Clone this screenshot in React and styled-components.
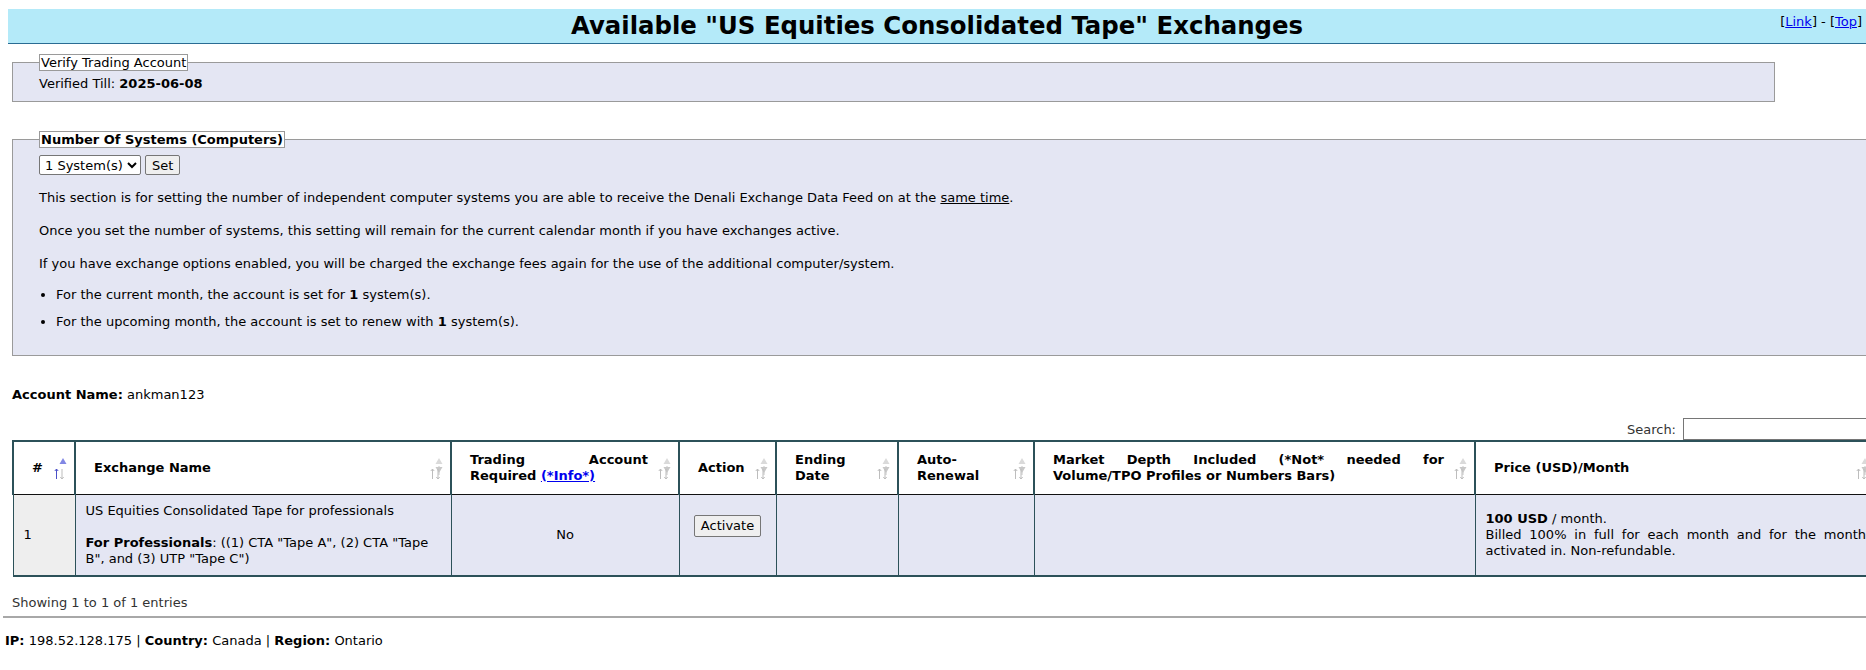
import React from "react";
import styled, { createGlobalStyle } from "styled-components";

const tahoma = `Tahoma, "DejaVu Sans", sans-serif`;
const verdana = `Verdana, "DejaVu Sans", sans-serif`;

const GlobalStyle = createGlobalStyle`
  html, body {
    margin: 0;
    padding: 0;
    background: #fff;
    overflow-x: hidden;
  }
  body {
    font-family: ${tahoma};
    font-size: 13px;
    color: #000;
  }
`;

const Page = styled.div`
  width: 1875px;
  padding-top: 9px;
`;

const TitleBar = styled.div`
  margin-left: 8px;
  width: 1858px;
  height: 34px;
  background: #b4eaf9;
  border-bottom: 1px solid #2a6c93;
  display: flex;
  align-items: center;
  justify-content: center;
  position: relative;
`;

const Title = styled.h1`
  margin: 0;
  font-family: ${verdana};
  font-size: 24.4px;
  font-weight: bold;
  line-height: 28px;
`;

const TopLinks = styled.div`
  position: absolute;
  right: 4px;
  top: 5px;
  font-size: 13px;
`;

const Link = styled.a`
  color: #0000ee;
  text-decoration: underline;
`;

const Fieldset = styled.fieldset`
  margin: ${(p) => p.$top}px 0 0 12px;
  width: ${(p) => p.$width}px;
  box-sizing: border-box;
  background: #e4e6f3;
  border: 1px solid #9a9a9a;
  padding: ${(p) => p.$pt}px 26px ${(p) => p.$bottom}px 26px;
  min-inline-size: 0;
`;

const Legend = styled.legend`
  background: #fff;
  border: 1px solid #9a9a9a;
  padding: 0 1px;
  font-weight: ${(p) => (p.$bold ? "bold" : "normal")};
  line-height: 15px;
`;

const Line = styled.div`
  line-height: 16px;
`;

const Controls = styled.div`
  display: flex;
  gap: 4px;
  align-items: center;
  margin-top: 3px;
`;

const Select = styled.select`
  font-family: ${tahoma};
  font-size: 13px;
  height: 20px;
  border: 1px solid #767676;
  border-radius: 2px;
  background: #fff;
  padding: 0 1px;
`;

const Button = styled.button`
  font-family: ${tahoma};
  font-size: 13px;
  height: ${(p) => p.$h || 20}px;
  padding: 0 6px;
  border: 1px solid #767676;
  border-radius: 2px;
  background: #efefef;
  color: #000;
`;

const ActionForm = styled.form`
  margin: 0 0 19px;
`;

const Para = styled.p`
  margin: 17px 0 0;
  line-height: 16px;
  ${Controls} + & {
    margin-top: 15px;
  }
`;

const List = styled.ul`
  margin: 15px 0 0;
  padding-left: 17px;
  li {
    line-height: 16px;
  }
  li + li {
    margin-top: 11px;
  }
`;

const Under = styled.span`
  text-decoration: underline;
`;

const AccountLine = styled.div`
  margin: 31px 0 0 12px;
  line-height: 16px;
`;

const SearchRow = styled.div`
  display: flex;
  justify-content: flex-end;
  align-items: center;
  gap: 7px;
  margin-top: 15px;
  font-family: ${verdana};
  color: #333;
`;

const SearchInput = styled.input`
  width: 192px;
  height: 22px;
  box-sizing: border-box;
  border: 1px solid #767676;
  background: #fff;
`;

const Table = styled.table`
  margin-left: 12px;
  width: 1863px;
  border-collapse: collapse;
  table-layout: fixed;
  border-top: 2px solid #2c5159;
  border-bottom: 2px solid #2c5159;
`;

const Th = styled.th`
  position: relative;
  box-sizing: border-box;
  padding: 10px 30px 10px 18px;
  font-family: ${(p) => (p.$v ? verdana : tahoma)};
  font-size: 13px;
  font-weight: bold;
  line-height: 16px;
  text-align: justify;
  vertical-align: middle;
  background: #fff;
  border-left: 2px solid #2c5159;
  border-bottom: 1px solid #111;
`;

const Td = styled.td`
  padding: 8px 10px;
  font-family: ${(p) => (p.$v ? verdana : tahoma)};
  font-size: 13px;
  line-height: 16px;
  vertical-align: middle;
  text-align: ${(p) => p.$align || "left"};
  background: ${(p) => (p.$sorted ? "#eeeeee" : "#e4e6f3")};
  border-left: 1px solid #2c5159;
`;

const Justified = styled.div`
  text-align: justify;
`;

const SortSvg = styled.svg`
  position: absolute;
  right: 6px;
  top: 50%;
  margin-top: -11px;
`;

const Info = styled.div`
  margin: 18px 0 0 12px;
  font-family: ${verdana};
  color: #333;
  line-height: 16px;
`;

const Rule = styled.hr`
  margin: 5px 0 0 3px;
  border: 0;
  border-top: 2px solid #a8a8a8;
  width: 1872px;
`;

const Footer = styled.div`
  margin: 15px 0 0 5px;
  font-family: ${verdana};
  line-height: 16px;
  padding-bottom: 20px;
`;

const SortIcon = ({ active }) => (
  <SortSvg width="16" height="24" viewBox="0 0 16 24">
    <path d="M11 1 L14.5 7 L7.5 7 Z" fill={active ? "#8187e4" : "#dadada"} />
    {!active && <path d="M11 16 L14.5 10 L7.5 10 Z" fill="#c8c8c8" />}
    {!active && <rect x="10.5" y="9" width="1" height="9" fill="#c8c8c8" />}
    <path
      d="M4.5 12 V22 M2.8 14 L4.5 12 L6.2 14"
      stroke={active ? "#4a4fc8" : "#bdbdbd"}
      strokeWidth="1"
      fill="none"
    />
    <path
      d="M10 12 V22 M8.3 20 L10 22 L11.7 20"
      stroke="#bdbdbd"
      strokeWidth="1"
      fill="none"
    />
  </SortSvg>
);

const columns = [
  { key: "num", width: 62, label: "#", v: true, active: true },
  { key: "name", width: 376, label: "Exchange Name", v: true },
  {
    key: "req",
    width: 228,
    v: true,
    label: (
      <>
        Trading Account Required <Link href="#">(*Info*)</Link>
      </>
    ),
  },
  { key: "action", width: 97, label: "Action" },
  { key: "end", width: 122, label: "Ending Date" },
  { key: "auto", width: 136, label: "Auto-Renewal" },
  {
    key: "depth",
    width: 441,
    label: "Market Depth Included (*Not* needed for Volume/TPO Profiles or Numbers Bars)",
  },
  { key: "price", width: 401, label: "Price (USD)/Month", v: true },
];

export default function App() {
  return (
    <Page>
      <GlobalStyle />
      <TitleBar>
        <Title>Available "US Equities Consolidated Tape" Exchanges</Title>
        <TopLinks>
          [<Link href="#">Link</Link>] - [<Link href="#">Top</Link>]
        </TopLinks>
      </TitleBar>

      <Fieldset $top={10} $pt={5} $width={1763} $bottom={9}>
        <Legend>Verify Trading Account</Legend>
        <Line>
          Verified Till: <b>2025-06-08</b>
        </Line>
      </Fieldset>

      <Fieldset $top={29} $pt={4} $width={1863} $bottom={25}>
        <Legend $bold>Number Of Systems (Computers)</Legend>
        <Controls>
          <Select defaultValue="1">
            <option value="1">1 System(s)</option>
          </Select>
          <Button>Set</Button>
        </Controls>
        <Para>
          This section is for setting the number of independent computer systems you
          are able to receive the Denali Exchange Data Feed on at the{" "}
          <Under>same time</Under>.
        </Para>
        <Para>
          Once you set the number of systems, this setting will remain for the current
          calendar month if you have exchanges active.
        </Para>
        <Para>
          If you have exchange options enabled, you will be charged the exchange fees
          again for the use of the additional computer/system.
        </Para>
        <List>
          <li>
            For the current month, the account is set for <b>1</b> system(s).
          </li>
          <li>
            For the upcoming month, the account is set to renew with <b>1</b> system(s).
          </li>
        </List>
      </Fieldset>

      <AccountLine>
        <b>Account Name:</b> ankman123
      </AccountLine>

      <SearchRow>
        <span>Search:</span>
        <SearchInput type="search" />
      </SearchRow>

      <Table>
        <colgroup>
          {columns.map((c) => (
            <col key={c.key} style={{ width: c.width }} />
          ))}
        </colgroup>
        <thead>
          <tr>
            {columns.map((c) => (
              <Th key={c.key} $v={c.v}>
                {c.label}
                <SortIcon active={c.active} />
              </Th>
            ))}
          </tr>
        </thead>
        <tbody>
          <tr>
            <Td $sorted $v>
              1
            </Td>
            <Td>
              US Equities Consolidated Tape for professionals
              <br />
              <br />
              <b>For Professionals</b>: ((1) CTA "Tape A", (2) CTA "Tape B", and (3)
              UTP "Tape C")
            </Td>
            <Td $v $align="center">
              No
            </Td>
            <Td $align="center">
              <ActionForm onSubmit={(e) => e.preventDefault()}>
                <Button $h={22}>Activate</Button>
              </ActionForm>
            </Td>
            <Td />
            <Td />
            <Td />
            <Td $v>
              <b>100 USD</b> / month.
              <Justified>
                Billed 100% in full for each month and for the month activated in.
                Non-refundable.
              </Justified>
            </Td>
          </tr>
        </tbody>
      </Table>

      <Info>Showing 1 to 1 of 1 entries</Info>
      <Rule />
      <Footer>
        <b>IP:</b> 198.52.128.175 | <b>Country:</b> Canada | <b>Region:</b> Ontario
      </Footer>
    </Page>
  );
}
